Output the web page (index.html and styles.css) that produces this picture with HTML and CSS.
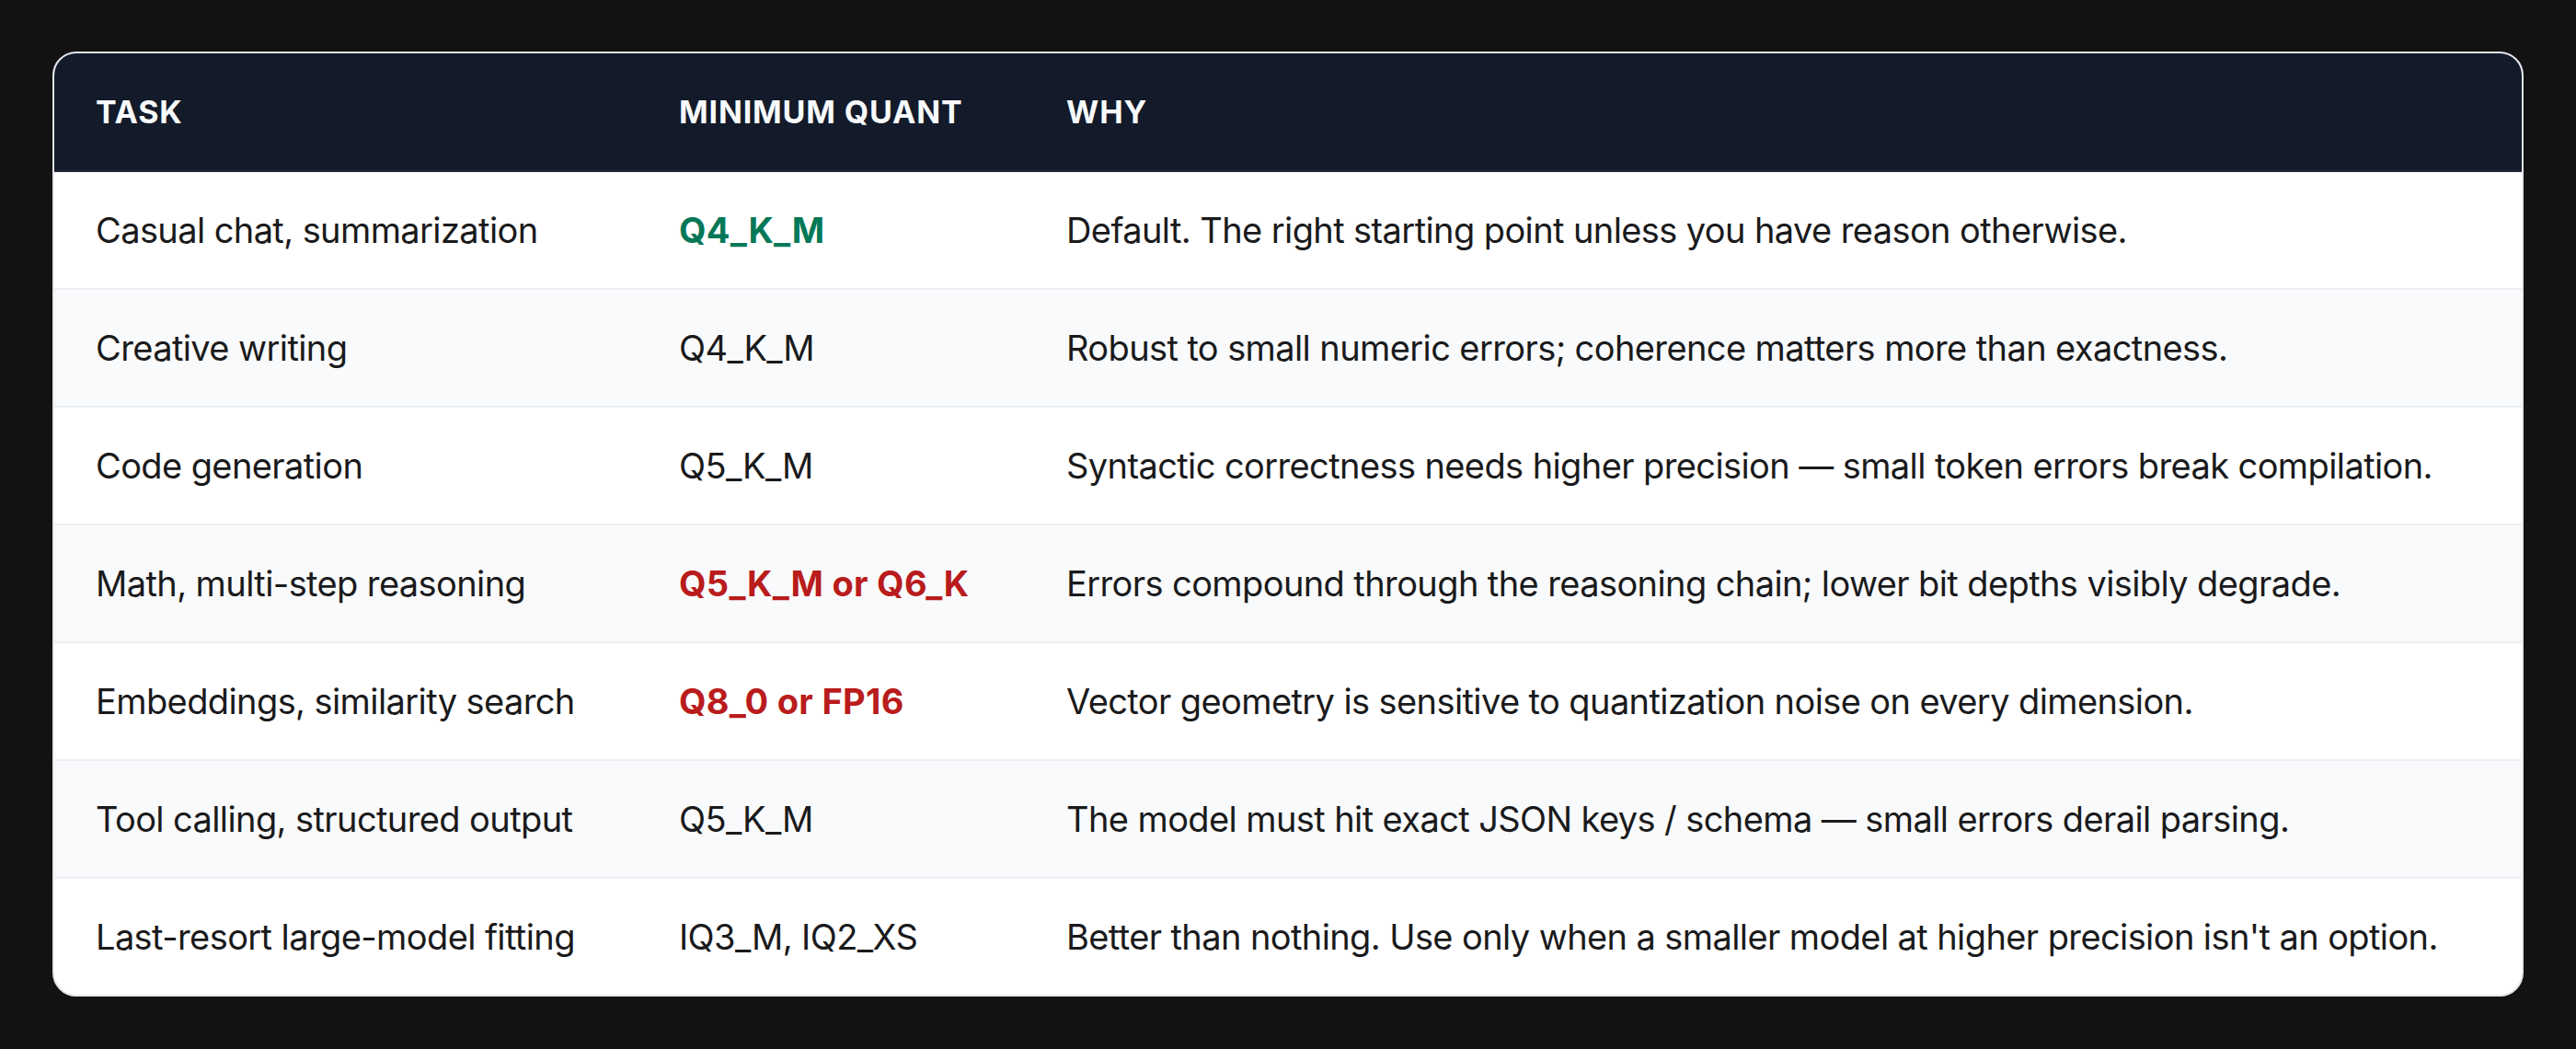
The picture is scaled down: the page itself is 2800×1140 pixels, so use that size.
FILE: index.html
```html
<!DOCTYPE html>
<html lang="en">
<head>
<meta charset="utf-8">
<title>Quantization guide</title>
<link rel="stylesheet" href="styles.css">
</head>
<body>
<div class="card">
  <table class="quant">
    <thead>
      <tr>
        <th class="c-task">Task</th>
        <th class="c-quant">Minimum quant</th>
        <th class="c-why">Why</th>
      </tr>
    </thead>
    <tbody>
      <tr>
        <td>Casual chat, summarization</td>
        <td class="good">Q4_K_M</td>
        <td>Default. The right starting point unless you have reason otherwise.</td>
      </tr>
      <tr>
        <td>Creative writing</td>
        <td>Q4_K_M</td>
        <td>Robust to small numeric errors; coherence matters more than exactness.</td>
      </tr>
      <tr>
        <td>Code generation</td>
        <td>Q5_K_M</td>
        <td>Syntactic correctness needs higher precision — small token errors break compilation.</td>
      </tr>
      <tr>
        <td>Math, multi-step reasoning</td>
        <td class="warn">Q5_K_M or Q6_K</td>
        <td>Errors compound through the reasoning chain; lower bit depths visibly degrade.</td>
      </tr>
      <tr>
        <td>Embeddings, similarity search</td>
        <td class="warn">Q8_0 or FP16</td>
        <td>Vector geometry is sensitive to quantization noise on every dimension.</td>
      </tr>
      <tr>
        <td>Tool calling, structured output</td>
        <td>Q5_K_M</td>
        <td>The model must hit exact JSON keys / schema — small errors derail parsing.</td>
      </tr>
      <tr>
        <td>Last-resort large-model fitting</td>
        <td>IQ3_M, IQ2_XS</td>
        <td>Better than nothing. Use only when a smaller model at higher precision isn't an option.</td>
      </tr>
    </tbody>
  </table>
</div>
</body>
</html>
```

FILE: styles.css
```css
html, body {
  margin: 0;
  padding: 0;
  background: #121212;
}

body {
  padding: 56px 57px;
  font-family: Inter, "Noto Sans", "Liberation Sans", sans-serif;
  color: #1a1a1c;
}

.card {
  background: #ffffff;
  border: 2px solid #e3e6ea;
  border-radius: 26px;
  overflow: hidden;
}

.quant {
  width: 100%;
  border-collapse: separate;
  border-spacing: 0;
  table-layout: fixed;
}

.quant th {
  background: #131a2a;
  color: #f8fafc;
  text-align: left;
  text-transform: uppercase;
  font-weight: 700;
  font-size: 34px;
  letter-spacing: 0.025em;
  height: 127px;
  padding: 0 45px;
  border-bottom: 2px solid #222a3a;
  vertical-align: middle;
}

.c-task { width: 544px; }
.c-quant { width: 331px; }

.quant td {
  font-size: 38px;
  font-weight: 400;
  letter-spacing: -0.6px;
  height: 126px;
  padding: 0 45px;
  border-bottom: 2px solid #eceef1;
  vertical-align: middle;
  white-space: nowrap;
}

.quant tbody tr:nth-child(even) td {
  background: #f9fafb;
}

.quant tbody tr:last-child td {
  border-bottom: none;
}

.quant td.good {
  color: #047857;
  font-weight: 700;
  letter-spacing: 0.3px;
}

.quant td.warn {
  color: #b91c1c;
  font-weight: 700;
  letter-spacing: 0.3px;
}
```
